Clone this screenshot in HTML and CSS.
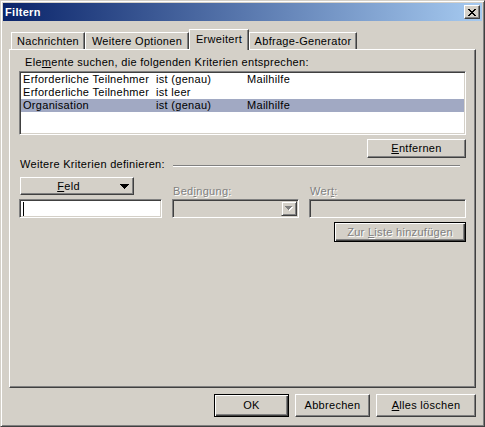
FILE: index.html
```html
<!DOCTYPE html>
<html>
<head>
<meta charset="utf-8">
<link rel="stylesheet" href="styles.css">
</head>
<body>
<div class="window">
  <div class="titlebar">
    <span class="title">Filtern</span>
    <div class="close">
      <svg width="8" height="7" viewBox="0 0 8 7" shape-rendering="crispEdges">
        <path fill="#000" d="M0 0h2v1H0zM6 0h2v1H6zM1 1h2v1H1zM5 1h2v1H5zM2 2h4v1H2zM3 3h2v1H3zM2 4h4v1H2zM1 5h2v1H1zM5 5h2v1H5zM0 6h2v1H0zM6 6h2v1H6z"/>
      </svg>
    </div>
  </div>
  <div class="client">
    <div class="tabs">
      <div class="tab t1">Nachrichten</div>
      <div class="tab t2">Weitere Optionen</div>
      <div class="tab t3 active">Erweitert</div>
      <div class="tab t4">Abfrage-Generator</div>
    </div>
    <div class="panel">
      <div class="lbl-elements">Ele<u>m</u>ente suchen, die folgenden Kriterien entsprechen:</div>
      <div class="listbox">
        <div class="row"><span>Erforderliche Teilnehmer</span><span>ist (genau)</span><span>Mailhilfe</span></div>
        <div class="row"><span>Erforderliche Teilnehmer</span><span>ist leer</span><span></span></div>
        <div class="row selected"><span>Organisation</span><span>ist (genau)</span><span>Mailhilfe</span></div>
      </div>
      <div class="right">
        <div class="btn entfernen"><span><u>E</u>ntfernen</span></div>
      </div>
      <div class="section">
        <span class="section-label">Weitere Kriterien definieren:</span>
        <span class="etch"></span>
      </div>
      <div class="criteria">
        <div class="btn feld">
          <span class="feld-text"><u>F</u>eld</span>
          <svg class="feld-arrow" width="9" height="5" viewBox="0 0 9 5" shape-rendering="crispEdges">
            <path fill="#000" d="M0 0h9v1H0zM1 1h7v1H1zM2 2h5v1H2zM3 3h3v1H3zM4 4h1v1H4z"/>
          </svg>
        </div>
        <div class="dlabel">Bed<u>i</u>ngung:</div>
        <div class="dlabel">Wer<u>t</u>:</div>
        <div class="field edit"><span class="caret"></span></div>
        <div class="field combo">
          <div class="dropbtn">
            <svg width="8" height="5" viewBox="0 0 8 5" shape-rendering="crispEdges">
              <path fill="#fff" d="M1 1h7v1H1zM2 2h5v1H2zM3 3h3v1H3zM4 4h1v1H4z"/>
              <path fill="#808080" d="M0 0h7v1H0zM1 1h5v1H1zM2 2h3v1H2zM3 3h1v1H3z"/>
            </svg>
          </div>
        </div>
        <div class="field grayfield"></div>
      </div>
      <div class="right">
        <div class="btn default disabled zur"><span>Zur <u>L</u>iste hinzufügen</span></div>
      </div>
    </div>
    <div class="buttons">
      <div class="btn default ok"><span>OK</span></div>
      <div class="btn abbrechen"><span>Abbrechen</span></div>
      <div class="btn alles"><span><u>A</u>lles löschen</span></div>
    </div>
  </div>
</div>
</body>
</html>
```
FILE: styles.css
```css
html, body {
  margin: 0;
  padding: 0;
}
body {
  font-family: "Liberation Sans", Arial, sans-serif;
  font-size: 11px;
  line-height: 13px;
  letter-spacing: 0.3px;
  color: #000;
  background: #d4d0c8;
}
.window {
  width: 485px;
  height: 427px;
  box-sizing: border-box;
  background: #d4d0c8;
  border: 1px solid;
  border-color: #d4d0c8 #404040 #404040 #d4d0c8;
  box-shadow: inset 1px 1px #fff, inset -1px -1px #808080;
  padding: 2px;
}
.titlebar {
  height: 18px;
  display: flex;
  align-items: center;
  justify-content: space-between;
  background: linear-gradient(to right, #0a246a, #a6caf0);
  padding: 0 2px;
}
.title {
  color: #fff;
  font-weight: bold;
}
.close {
  width: 16px;
  height: 14px;
  box-sizing: border-box;
  background: #d4d0c8;
  border: 1px solid;
  border-color: #fff #404040 #404040 #fff;
  box-shadow: inset -1px -1px #808080;
  display: flex;
  align-items: center;
  justify-content: center;
}
.close svg { display: block; }
.client {
  padding: 8px 6px 0 6px;
}
.tabs {
  display: flex;
  align-items: flex-end;
  height: 20px;
  padding-left: 2px;
  position: relative;
  z-index: 1;
}
.tab {
  box-sizing: border-box;
  height: 17px;
  border: 1px solid;
  border-bottom: none;
  border-color: #fff #404040 transparent #fff;
  box-shadow: inset -1px 0 #808080;
  text-align: center;
  padding-top: 2px;
  white-space: nowrap;
}
.t1 { width: 74px; }
.t2 { width: 104px; }
.t3 { width: 60px; }
.t4 { width: 108px; }
.tab.active {
  height: 21px;
  margin-bottom: -1px;
  padding-top: 3px;
  background: #d4d0c8;
}
.panel {
  box-sizing: border-box;
  height: 339px;
  border: 1px solid;
  border-color: #fff #404040 #404040 #fff;
  box-shadow: inset -1px -1px #808080;
  padding: 0 9px;
}
.lbl-elements {
  margin: 6px 0 0 6px;
  white-space: nowrap;
}
.listbox {
  margin-top: 2px;
  height: 64px;
  box-sizing: border-box;
  background: #fff;
  border: 1px solid;
  border-color: #808080 #fff #fff #808080;
  box-shadow: inset 1px 1px #404040, inset -1px -1px #d4d0c8;
  padding: 1px;
}
.row {
  display: grid;
  grid-template-columns: 133px 91px 1fr;
  height: 13px;
  padding-left: 2px;
  white-space: nowrap;
}
.row.selected {
  background: #a1a9c3;
}
.right {
  display: flex;
  justify-content: flex-end;
}
.btn {
  box-sizing: border-box;
  display: flex;
  align-items: center;
  justify-content: center;
  background: #d4d0c8;
  border: 1px solid;
  border-color: #fff #404040 #404040 #fff;
  box-shadow: inset -1px -1px #808080;
  height: 23px;
  white-space: nowrap;
}
.btn.default {
  border-color: #000;
  box-shadow: inset 1px 1px #fff, inset -1px -1px #404040, inset -2px -2px #808080;
}
.btn.disabled {
  color: #808080;
  text-shadow: 1px 1px #fff;
}
.entfernen {
  margin-top: 4px;
  width: 99px;
  height: 19px;
}
.section {
  display: grid;
  grid-template-columns: 154px 1fr;
  height: 13px;
}
.section-label {
  margin-left: 1px;
  white-space: nowrap;
}
.etch {
  margin: 7px 6px 0 0;
  height: 0;
  border-top: 1px solid #808080;
  border-bottom: 1px solid #fff;
}
.criteria {
  display: grid;
  grid-template-columns: 143px 127px 157px;
  grid-template-rows: 18px 19px;
  column-gap: 10px;
  row-gap: 4px;
  margin-top: 6px;
}
.feld {
  margin-left: 1px;
  width: 114px;
  height: 18px;
  justify-content: flex-start;
}
.feld-text {
  width: 95px;
  text-align: center;
}
.feld-arrow {
  display: block;
  margin-left: 4px;
}
.dlabel {
  padding: 8px 0 0 1px;
  color: #808080;
  text-shadow: 1px 1px #fff;
  white-space: nowrap;
}
.field {
  box-sizing: border-box;
  border: 1px solid;
  border-color: #808080 #fff #fff #808080;
  box-shadow: inset 1px 1px #404040, inset -1px -1px #d4d0c8;
}
.edit {
  background: #fff;
  display: flex;
  align-items: center;
  padding-left: 3px;
}
.caret {
  display: block;
  width: 1px;
  height: 14px;
  background: #000;
}
.combo {
  background: #d4d0c8;
  display: flex;
  justify-content: flex-end;
  align-items: center;
  padding: 1px;
}
.dropbtn {
  box-sizing: border-box;
  width: 16px;
  height: 15px;
  background: #d4d0c8;
  border: 1px solid;
  border-color: #d4d0c8 #404040 #404040 #d4d0c8;
  box-shadow: inset 1px 1px #fff, inset -1px -1px #808080;
  display: flex;
  align-items: center;
  justify-content: center;
}
.dropbtn svg { display: block; }
.grayfield {
  background: #d4d0c8;
}
.zur {
  margin-top: 4px;
  width: 132px;
  height: 20px;
}
.buttons {
  display: flex;
  justify-content: flex-end;
  gap: 6px;
  margin-top: 6px;
}
.ok, .abbrechen { width: 75px; }
.alles { width: 100px; }
```
